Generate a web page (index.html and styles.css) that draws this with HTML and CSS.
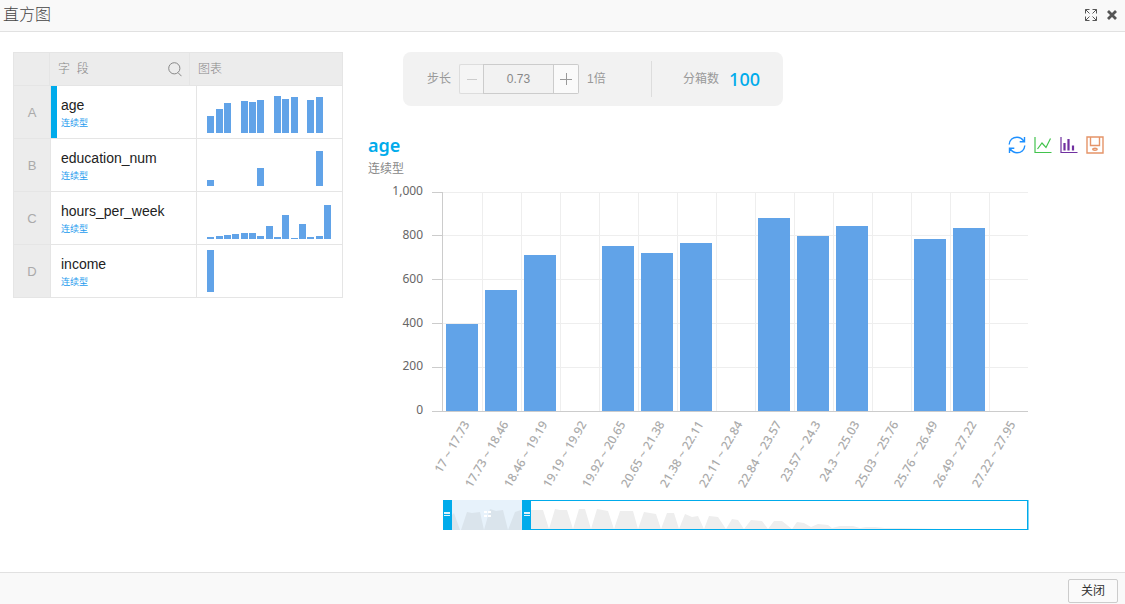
FILE: index.html
```html
<!DOCTYPE html>
<html lang="zh-CN">
<head>
<meta charset="utf-8">
<title>直方图</title>
<link rel="stylesheet" href="styles.css">
</head>
<body>
<div class="dialog">
  <header class="dialog-header">
    <h1 class="dialog-title">直方图</h1>
    <div class="window-tools">
      <button class="icon-button" aria-label="全屏"><svg width="14" height="14" viewBox="0 0 14 14" fill="none" stroke="#555"><path d="M1.500 5.500v-4h4M8.500 1.500h4v4M12.500 8.500v4h-4M5.500 12.500h-4v-4M1.500 1.500l4 4M12.500 1.500l-4 4M12.500 12.500l-4-4M1.500 12.500l4-4"/></svg></button>
      <button class="icon-button" aria-label="关闭窗口"><svg width="10" height="10" viewBox="0 0 10 10" fill="none" stroke="#555" stroke-width="2.8"><path d="M1 1l8 8M9 1L1 9"/></svg></button>
    </div>
  </header>

  <main class="content">
    <table class="fields">
      <thead>
        <tr>
          <th></th>
          <th class="field-head"><span>字&nbsp; 段</span><button class="icon-button" aria-label="搜索"><svg width="14" height="15" viewBox="0 0 14 15" fill="none" stroke="#888"><circle cx="6.3" cy="6.3" r="5.6"/><path d="M10.2 10.8l3.3 3.4"/></svg></button></th>
          <th class="chart-head">图表</th>
        </tr>
      </thead>
      <tbody>
        <tr class="selected">
          <td class="letter">A</td>
          <td class="field"><span class="field-name">age</span><span class="field-type">连续型</span></td>
          <td class="spark"><svg width="145" height="52" fill="#61a3e8" shape-rendering="crispEdges"><path d="M10 47v-17h7v17zM19 47v-24h7v24zM27 47v-30h7v30zM44 47v-32h7v32zM52 47v-31h7v31zM60 47v-33h7v33zM77 47v-37h7v37zM85 47v-34h7v34zM94 47v-36h7v36zM110 47v-33h7v33zM119 47v-36h7v36z"/></svg></td>
        </tr>
        <tr>
          <td class="letter">B</td>
          <td class="field"><span class="field-name">education_num</span><span class="field-type">连续型</span></td>
          <td class="spark"><svg width="145" height="52" fill="#61a3e8" shape-rendering="crispEdges"><path d="M10 47v-6h7v6zM60 47v-18h7v18zM119 47v-35h7v35z"/></svg></td>
        </tr>
        <tr>
          <td class="letter">C</td>
          <td class="field"><span class="field-name">hours_per_week</span><span class="field-type">连续型</span></td>
          <td class="spark"><svg width="145" height="52" fill="#61a3e8" shape-rendering="crispEdges"><path d="M10 47v-2h7v2zM19 47v-3h7v3zM27 47v-4h7v4zM35 47v-5h7v5zM44 47v-6h7v6zM52 47v-6h7v6zM60 47v-3h7v3zM69 47v-13h7v13zM77 47v-2h7v2zM85 47v-24h7v24zM94 47v-1h7v1zM102 47v-15h7v15zM110 47v-2h7v2zM119 47v-3h7v3zM127 47v-34h7v34z"/></svg></td>
        </tr>
        <tr>
          <td class="letter">D</td>
          <td class="field"><span class="field-name">income</span><span class="field-type">连续型</span></td>
          <td class="spark"><svg width="145" height="52" fill="#61a3e8" shape-rendering="crispEdges"><path d="M10 47v-42h7v42z"/></svg></td>
        </tr>
      </tbody>
    </table>

    <section class="panel">
      <div class="settings">
        <label for="step">步长</label>
        <div class="stepper">
          <button class="step-button step-minus" aria-label="减少" disabled><svg width="12" height="12" stroke="#ccc"><path d="M1 6.500h10"/></svg></button>
          <input id="step" class="step-input" type="text" value="0.73">
          <button class="step-button step-plus" aria-label="增加"><svg width="12" height="12" stroke="#999"><path d="M0 6.500h12M6.500 0v12"/></svg></button>
        </div>
        <span>1倍</span>
        <div class="bins"><span>分箱数</span><strong class="bin-count">100</strong></div>
      </div>

      <div class="chart-header">
        <div>
          <h2 class="chart-title">age</h2>
          <p class="chart-type">连续型</p>
        </div>
        <div class="chart-tools">
          <button class="icon-button" aria-label="刷新"><svg width="18" height="18" viewBox="0 0 18 18" fill="none" stroke="#1e90ff" stroke-width="1.4"><path d="M1.200 8.500C1.500 3.800 5 1.200 9 1.200c2.800 0 5 1.300 6.700 3.800M16.500 1v4.700h-4.800M16.800 9.500c-.3 4.700-3.800 7.300-7.800 7.300-2.800 0-5-1.300-6.700-3.800M1.500 17v-4.700h4.800"/></svg></button>
          <button class="icon-button" aria-label="折线图"><svg width="18" height="18" viewBox="0 0 18 18" fill="none" stroke="#42c34d" stroke-width="1.2"><path d="M1 1v15.500H17.500M3.500 13l4.500-6 4 4.500 4.500-9"/></svg></button>
          <button class="icon-button" aria-label="柱状图"><svg width="18" height="18" viewBox="0 0 18 18" fill="none" stroke="#7030a0" stroke-width="1.200"><path d="M1 1v15.500H17.500"/><path d="M4 7.500v6.500h1V7.500zM8 3.500V14h1V3.500zM12.500 10v4h1v-4z"/></svg></button>
          <button class="icon-button" aria-label="保存为图片"><svg width="18" height="18" viewBox="0 0 18 18" fill="none" stroke="#e59468" stroke-width="1.400"><path d="M1 1h16v16H1zM4.500 1v8.500h9V1"/><ellipse cx="9" cy="13.300" rx="2.200" ry="1"/></svg></button>
        </div>
      </div>

      <svg class="histogram" viewBox="368 182 737 350" role="img" aria-label="age 直方图">
        <g shape-rendering="crispEdges">
          <path class="grid" d="M443 192.500H1028M443 235.500H1028M443 279.500H1028M443 323.500H1028M443 367.500H1028M482.500 192V411M521.500 192V411M560.500 192V411M599.500 192V411M638.500 192V411M677.500 192V411M716.500 192V411M755.500 192V411M794.500 192V411M833.500 192V411M872.500 192V411M911.500 192V411M950.500 192V411M989.500 192V411"/>
          <path class="axis" d="M432 192.500H442M432 235.500H442M432 279.500H442M432 323.500H442M432 367.500H442M432 411.500H1028M442.500 192V411"/>
          <path class="bars" d="M446 324h32v87h-32zM485 290h32v121h-32zM524 255h32v156h-32zM602 246h32v165h-32zM641 253h32v158h-32zM680 243h32v168h-32zM758 218h32v193h-32zM797 236h32v175h-32zM836 226h32v185h-32zM914 239h32v172h-32zM953 228h32v183h-32z"/>
        </g>
        <g class="y-labels">
          <text x="423" y="195">1,000</text>
          <text x="423" y="239">800</text>
          <text x="423" y="283">600</text>
          <text x="423" y="327">400</text>
          <text x="423" y="370">200</text>
          <text x="423" y="414">0</text>
        </g>
        <g class="x-labels">
          <text transform="translate(470 424) rotate(-60)">17 ~ 17.73</text>
          <text transform="translate(509 424) rotate(-60)">17.73 ~ 18.46</text>
          <text transform="translate(548 424) rotate(-60)">18.46 ~ 19.19</text>
          <text transform="translate(587 424) rotate(-60)">19.19 ~ 19.92</text>
          <text transform="translate(626 424) rotate(-60)">19.92 ~ 20.65</text>
          <text transform="translate(665 424) rotate(-60)">20.65 ~ 21.38</text>
          <text transform="translate(704 424) rotate(-60)">21.38 ~ 22.11</text>
          <text transform="translate(743 424) rotate(-60)">22.11 ~ 22.84</text>
          <text transform="translate(782 424) rotate(-60)">22.84 ~ 23.57</text>
          <text transform="translate(821 424) rotate(-60)">23.57 ~ 24.3</text>
          <text transform="translate(860 424) rotate(-60)">24.3 ~ 25.03</text>
          <text transform="translate(899 424) rotate(-60)">25.03 ~ 25.76</text>
          <text transform="translate(938 424) rotate(-60)">25.76 ~ 26.49</text>
          <text transform="translate(977 424) rotate(-60)">26.49 ~ 27.22</text>
          <text transform="translate(1016 424) rotate(-60)">27.22 ~ 27.95</text>
        </g>
        <g>
          <rect x="443.500" y="500.500" width="584" height="29" fill="#fff" stroke="#00abeb"/>
          <path d="M1028.500 500v30" stroke="#7fd5f5"/>
          <path fill="#eee" d="M531 529V510L543 510L549 529L555 509L560 510L567 510L573 529L579 509L585 509L591 529L597 509L608 511L614 529L620 511L633 511L638 529L644 512L656 514L661 529L667 513L674 513L679 529L685 514L692 517L698 516L704 529L709 516L718 517L726 529L732 519L738 520L744 529L751 520L762 521L768 529L774 521L782 521L792 529L797 522L804 523L811 527L818 524L828 525L832 528L840 526L853 526L860 528L866 527L875 527L885 528L900 528L940 529z"/>
          <rect x="452" y="500" width="70" height="30" fill="#e7f2fb"/>
          <path fill="#dae4ec" d="M452 530V515L454 513L460 530L461 530L467 512L472 513L480 512L484 530L490 509L496 511L503 510L508 530L515 512L521 510L522 530z"/>
          <path fill="#00abeb" d="M443 500h9v30h-9zM522 500h9v30h-9z"/>
          <path fill="#dff4fd" d="M444 512h6v2h-6zM444 515h6v1h-6zM524 512h6v2h-6zM524 515h6v1h-6z"/>
          <path d="M484 512h7M484 516h7" stroke="#fff" stroke-width="2" stroke-dasharray="3 1"/>
        </g>
      </svg>
    </section>
  </main>

  <footer class="dialog-footer"><button class="close-button">关闭</button></footer>
</div>
</body>
</html>
```
FILE: styles.css
```css
* { box-sizing: border-box; }
body {
  margin: 0;
  background: #fff;
  color: #999;
  font: 12px/18px "Liberation Sans", "Noto Sans CJK SC", sans-serif;
}
button, input { font: inherit; color: inherit; padding: 0; margin: 0; }
svg { display: block; }
.dialog { display: flex; flex-direction: column; min-height: 100vh; }
.dialog-header {
  display: flex;
  justify-content: space-between;
  align-items: center;
  height: 32px;
  padding: 0 8px 2px 3px;
  background: #f9f9f9;
  border-bottom: 1px solid #e1e1e1;
}
.dialog-title { margin: 0; font-size: 16px; font-weight: 300; line-height: 24px; color: #444; }
.window-tools { display: flex; align-items: center; gap: 9px; }
.icon-button { border: 0; background: none; cursor: pointer; }

.content { flex: 1; display: flex; align-items: flex-start; gap: 25px; padding: 20px 20px 20px 13px; }

.fields { display: block; flex: none; width: 330px; border: 1px solid #e5e5e5; }
.fields thead, .fields tbody { display: block; }
.fields tr { display: grid; border-bottom: 1px solid #e5e5e5; }
.fields th, .fields td { padding: 0; border-right: 1px solid #e5e5e5; }
.fields th:last-child, .fields td:last-child { border-right: 0; }
.fields thead tr { grid-template-columns: 36px 140px 1fr; height: 33px; background: #ececec; }
.fields th { font-weight: 300; text-align: left; line-height: 32px; color: #888; }
.field-head { display: flex; justify-content: space-between; align-items: center; }
.fields .field-head { padding: 0 7px 0 8px; }
.fields .chart-head { padding-left: 8px; }
.fields tbody tr { grid-template-columns: 37px 146px 1fr; height: 53px; }
.fields tbody tr:last-child { border-bottom: 0; height: 52px; }
.fields .letter { background: #ececec; padding-top: 2px; text-align: center; line-height: 50px; font-size: 13px; color: #aaa; }
.fields .field { display: flex; flex-direction: column; padding: 10px 0 0 10px; }
.fields .selected .field { border-left: 6px solid #00abeb; padding-left: 4px; }
.field-name { font-size: 14px; line-height: 18px; color: #222; }
.field-type { font-size: 9px; line-height: 18px; color: #1e9bee; }

.panel { flex: 1; min-width: 0; }
.settings {
  display: flex;
  align-items: center;
  gap: 8px;
  width: 380px;
  height: 54px;
  margin-left: 35px;
  padding: 0 23px 0 24px;
  background: #f2f2f2;
  border-radius: 8px;
}
.stepper { display: flex; height: 30px; }
.step-button {
  display: grid;
  place-items: center;
  width: 25px;
  border: 1px solid #ccc;
  background: #fafafa;
}
.step-minus { width: 24px; border-color: #ddd; border-right: 0; border-radius: 2px 0 0 2px; background: #f5f5f5; }
.step-plus { border-left: 0; border-radius: 0 2px 2px 0; }
.step-input { width: 71px; border: 1px solid #ccc; border-radius: 0; background: #f2f2f2; text-align: center; color: #888; }
.bins {
  display: flex;
  align-items: center;
  gap: 10px;
  height: 36px;
  margin-left: auto;
  padding-left: 31px;
  border-left: 1px solid #ddd;
}
.bin-count { font: 500 18px/24px "Noto Sans", sans-serif; color: #00abeb; }

.chart-header { display: flex; justify-content: space-between; height: 76px; padding-top: 28px; }
.chart-title { margin: 0; font: 600 18px/22px "Noto Sans", sans-serif; color: #00abeb; }
.chart-type { margin: 0; line-height: 26px; color: #888; }
.chart-tools { display: flex; gap: 8px; align-items: flex-start; padding: 2px 1px 0 0; }
.histogram { width: 100%; height: auto; font: 12px "Noto Sans", sans-serif; }
.grid { stroke: #eee; }
.axis { stroke: #ccc; }
.bars { fill: #61a3e8; }
.y-labels { text-anchor: end; fill: #666; }
.x-labels { text-anchor: end; font-weight: 500; fill: #aaa; }

.dialog-footer {
  display: flex;
  justify-content: flex-end;
  align-items: center;
  height: 32px;
  padding: 4px 7px 0;
  background: #f9f9f9;
  border-top: 1px solid #e1e1e1;
}
.close-button {
  width: 50px;
  height: 24px;
  border: 1px solid #ccc;
  border-radius: 2px;
  background: #fafafa;
  color: #333;
}
```
